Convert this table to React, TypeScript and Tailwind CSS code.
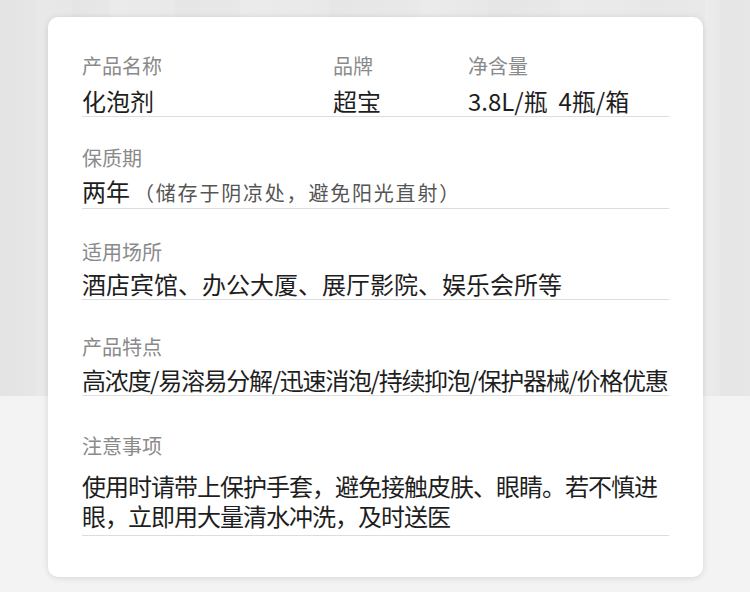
import React from 'react';

const planks =
  'bg-[linear-gradient(to_bottom,transparent_396px,#f3f3f3_396px),linear-gradient(to_right,#e3e3e3_0px,#e6e6e6_36px,#e9e9e9_36px,#e7e7e7_72px,#e4e4e4_72px,#e8e8e8_110px,#ebebeb_110px,#e9e9e9_175px,#e6e6e6_175px,#e8e8e8_240px,#ebebeb_240px,#e9e9e9_330px,#e6e6e6_330px,#e9e9e9_420px,#ebebeb_420px,#e8e8e8_488px,#e5e5e5_488px,#e8e8e8_560px,#ebebeb_560px,#e9e9e9_640px,#e7e7e7_640px,#e9e9e9_705px,#ececec_705px,#e9e9e9_720px,#e5e5e5_720px,#e7e7e7_750px)]';

function Divider() {
  return <div className="h-px bg-[#dddddd]" />;
}

function Label({ children }: { children: React.ReactNode }) {
  return <div className="text-[20px] leading-[20px] text-[#8a8a8a]">{children}</div>;
}

export default function App() {
  return (
    <div
      className={`w-[750px] h-[592px] pt-[17px] pl-[48px] ${planks}`}
      style={{ fontFamily: '"Noto Sans CJK SC", "Noto Sans", sans-serif' }}
    >
      <div className="w-[655px] h-[560px] bg-white rounded-[10px] shadow-[0_1px_6px_rgba(0,0,0,0.12)] px-[34px] pt-[39px]">
        {/* 名称 / 品牌 / 净含量 */}
        <div className="grid grid-cols-[251px_135px_1fr]">
          <Label>产品名称</Label>
          <Label>品牌</Label>
          <Label>净含量</Label>
          <div className="mt-[10px] text-[24px] leading-[30px] text-[#1e1e1e]">化泡剂</div>
          <div className="mt-[10px] text-[24px] leading-[30px] text-[#1e1e1e]">超宝</div>
          <div className="mt-[10px] text-[24px] leading-[30px] text-[#1e1e1e] whitespace-pre">3.8L/瓶  4瓶/箱</div>
        </div>
        <Divider />

        {/* 保质期 */}
        <div className="mt-[31px]">
          <Label>保质期</Label>
          <div className="mt-[8px] text-[24px] leading-[30px] text-[#1e1e1e] whitespace-nowrap">
            两年<span className="ml-[4px] text-[20px] tracking-[1.8px] text-[#555]">（储存于阴凉处，避免阳光直射）</span>
          </div>
        </div>
        <Divider />

        {/* 适用场所 */}
        <div className="mt-[33px]">
          <Label>适用场所</Label>
          <div className="mt-[7px] text-[24px] leading-[30px] text-[#1e1e1e]">酒店宾馆、办公大厦、展厅影院、娱乐会所等</div>
        </div>
        <Divider />

        {/* 产品特点 */}
        <div className="mt-[37px]">
          <Label>产品特点</Label>
          <div className="mt-[8px] text-[24px] leading-[30px] text-[#1e1e1e] tracking-[-1.3px] whitespace-nowrap">
            高浓度/易溶易分解/迅速消泡/持续抑泡/保护器械/价格优惠
          </div>
        </div>
        <Divider />

        {/* 注意事项 */}
        <div className="mt-[40px] pb-[4px]">
          <Label>注意事项</Label>
          <div className="mt-[15px] text-[24px] leading-[30px] text-[#1e1e1e] tracking-[-1px]">
            <div className="whitespace-nowrap">使用时请带上保护手套，避免接触皮肤、眼睛。若不慎进</div>
            <div>眼，立即用大量清水冲洗，及时送医</div>
          </div>
        </div>
        <Divider />
      </div>
    </div>
  );
}
